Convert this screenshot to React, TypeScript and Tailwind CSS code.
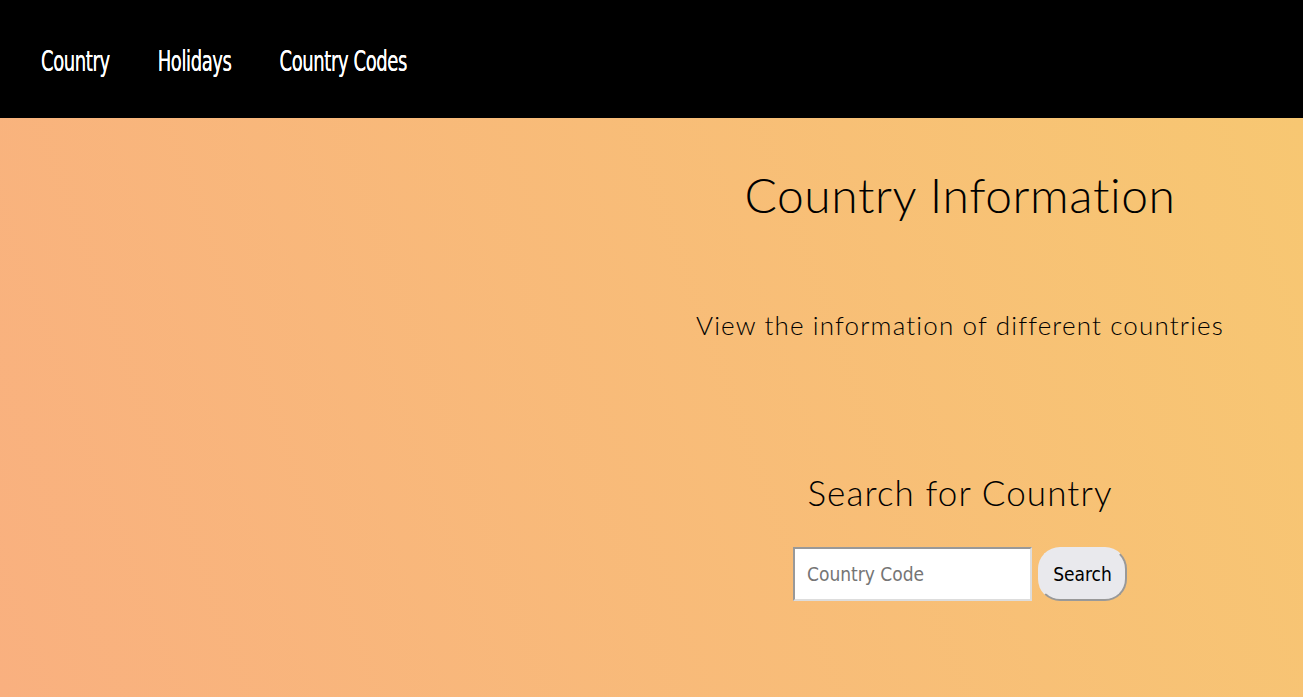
import React, { useState } from 'react';

const navLinks = ['Country', 'Holidays', 'Country Codes'];

const App: React.FC = () => {
  const [code, setCode] = useState('');

  return (
    <div className="min-h-[697px] flex flex-col">
      {/* Nav */}
      <nav className="bg-black h-[118px] flex items-center pl-[41px] gap-[48px]">
        {navLinks.map((link) => (
          <a
            key={link}
            href="#"
            className="inline-block text-white text-[20px] font-['DejaVu_Sans_Condensed',sans-serif] tracking-[-0.4px] scale-y-[1.4] mt-[4px] [text-shadow:0_0_0.4px_white]"
          >
            {link}
          </a>
        ))}
      </nav>

      {/* Main */}
      <main className="flex-1 flex bg-[linear-gradient(70deg,#f9b07f,#f7c772)]">
        <div className="w-[617px]" />
        <div className="flex-1 flex flex-col items-center text-black font-['Lato','Noto_Sans',sans-serif] font-light">
          <h1 className="mt-[48px] text-[48px] leading-[58px] tracking-[0.6px]">Country Information</h1>
          <p className="mt-[84px] text-[26px] leading-[34px] tracking-[1.15px]">View the information of different countries</p>
          <h2 className="mt-[127px] text-[35px] leading-[46px] tracking-[1.1px]">Search for Country</h2>
          <div className="mt-[32px] flex items-center gap-[6px] font-normal font-['DejaVu_Sans_Condensed',sans-serif]">
            <input
              type="text"
              value={code}
              onChange={(e) => setCode(e.target.value)}
              placeholder="Country Code"
              className="w-[239px] h-[54px] bg-white px-[12px] text-[19px] text-black placeholder:text-[#757575] border-2 border-t-[#999] border-l-[#999] border-b-[#ddd] border-r-[#ddd] outline-none"
            />
            <button className="w-[89px] h-[54px] rounded-[22px] bg-[#e9e9ed] text-[19px] text-black border-2 border-t-[#e9e9ed] border-l-[#e9e9ed] border-b-[#999] border-r-[#999]">
              Search
            </button>
          </div>
        </div>
      </main>
    </div>
  );
};

export default App;
